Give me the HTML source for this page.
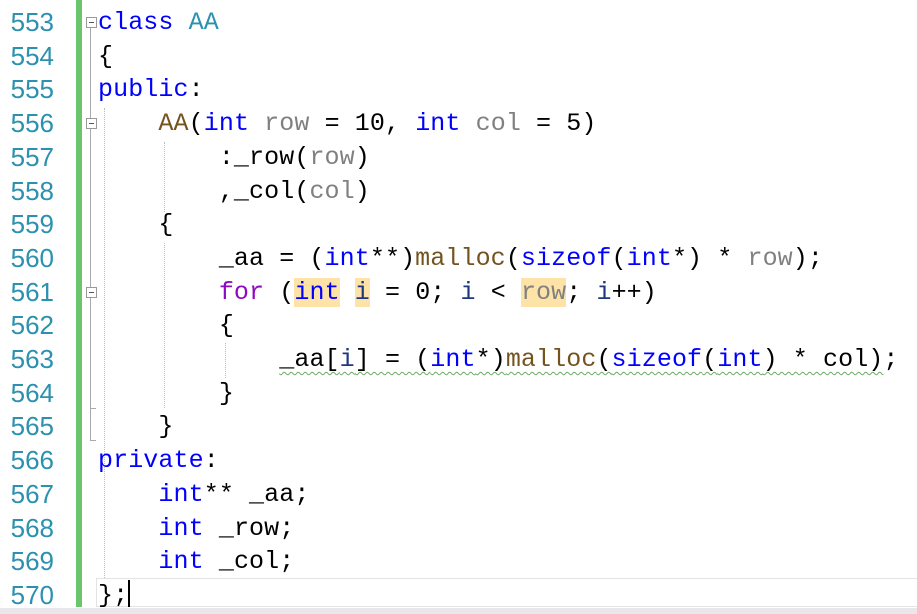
<!DOCTYPE html>
<html><head><meta charset="utf-8"><style>
body{margin:0;width:917px;height:614px;background:#fff;overflow:hidden;position:relative;font-family:"Liberation Mono",monospace;font-size:25px}
.ln{position:absolute;left:0;width:54px;text-align:right;color:#2b91af;font-family:"Liberation Sans",sans-serif;font-size:26px;height:33.7px;line-height:34px}
.c{position:absolute;left:98px;height:33.7px;line-height:35px;white-space:pre;color:#000;letter-spacing:0.1px}
.k{color:#0000ff}.t{color:#2b91af}.f{color:#74531f}.p{color:#808080}.v{color:#1f377f}.pu{color:#8f08c4}
.h{background:#fde3a7}
.sq{text-decoration:underline wavy #6aaa64;text-decoration-thickness:1px;text-underline-offset:5px}
.fold{position:absolute;left:86px;width:9px;height:9px;border:1px solid #999;background:#fff;font-size:0}
.fold:after{content:"";position:absolute;left:2px;top:4px;width:5px;height:1px;background:#555}
.g{position:absolute;border-left:1px dotted #bbb}
</style></head><body>
<div style="position:absolute;left:76px;top:0;width:6px;height:607px;background:#6cc46c"></div>
<div style="position:absolute;left:90px;top:28px;width:1px;height:412px;background:#aaa"></div>
<div style="position:absolute;left:90px;top:408px;width:6px;height:1px;background:#aaa"></div>
<div style="position:absolute;left:90px;top:440px;width:6px;height:1px;background:#aaa"></div>
<div class="fold" style="top:17px"></div>
<div class="fold" style="top:118px"></div>
<div class="fold" style="top:287px"></div>
<div class="g" style="left:104px;top:108px;height:470px"></div>
<div class="g" style="left:164px;top:142px;height:70px"></div>
<div class="g" style="left:164px;top:243px;height:165px"></div>
<div class="g" style="left:225px;top:343px;height:35px"></div>
<div style="position:absolute;left:96px;top:578px;width:830px;height:29px;border:1px solid #e3e3e6;box-sizing:border-box"></div>
<div style="position:absolute;left:128px;top:580px;width:2px;height:27px;background:#000"></div>
<div style="position:absolute;left:0;top:608px;width:917px;height:6px;background:#e8e8ec"></div>

<div class="ln" style="top:5px">553</div><div class="c" style="top:5px"><span class="k">class</span> <span class="t">AA</span></div>
<div class="ln" style="top:38.7px">554</div><div class="c" style="top:38.7px">{</div>
<div class="ln" style="top:72.4px">555</div><div class="c" style="top:72.4px"><span class="k">public</span>:</div>
<div class="ln" style="top:106.1px">556</div><div class="c" style="top:106.1px">    <span class="f">AA</span>(<span class="k">int</span> <span class="p">row</span> = 10, <span class="k">int</span> <span class="p">col</span> = 5)</div>
<div class="ln" style="top:139.8px">557</div><div class="c" style="top:139.8px">        :_row(<span class="p">row</span>)</div>
<div class="ln" style="top:173.5px">558</div><div class="c" style="top:173.5px">        ,_col(<span class="p">col</span>)</div>
<div class="ln" style="top:207.2px">559</div><div class="c" style="top:207.2px">    {</div>
<div class="ln" style="top:240.9px">560</div><div class="c" style="top:240.9px">        _aa = (<span class="k">int</span>**)<span class="f">malloc</span>(<span class="k">sizeof</span>(<span class="k">int</span>*) * <span class="p">row</span>);</div>
<div class="ln" style="top:274.6px">561</div><div class="c" style="top:274.6px">        <span class="pu">for</span> (<span class="k h">int</span> <span class="v h">i</span> = 0; <span class="v">i</span> &lt; <span class="p h">row</span>; <span class="v">i</span>++)</div>
<div class="ln" style="top:308.3px">562</div><div class="c" style="top:308.3px">        {</div>
<div class="ln" style="top:342px">563</div><div class="c" style="top:342px">            <span class="sq">_aa[<span class="v">i</span>] = (<span class="k">int</span>*)<span class="f">malloc</span>(<span class="k">sizeof</span>(<span class="k">int</span>) * col)</span>;</div>
<div class="ln" style="top:375.7px">564</div><div class="c" style="top:375.7px">        }</div>
<div class="ln" style="top:409.4px">565</div><div class="c" style="top:409.4px">    }</div>
<div class="ln" style="top:443.1px">566</div><div class="c" style="top:443.1px"><span class="k">private</span>:</div>
<div class="ln" style="top:476.8px">567</div><div class="c" style="top:476.8px">    <span class="k">int</span>** _aa;</div>
<div class="ln" style="top:510.5px">568</div><div class="c" style="top:510.5px">    <span class="k">int</span> _row;</div>
<div class="ln" style="top:544.2px">569</div><div class="c" style="top:544.2px">    <span class="k">int</span> _col;</div>
<div class="ln" style="top:577.9px">570</div><div class="c" style="top:577.9px">};</div>
</body></html>
